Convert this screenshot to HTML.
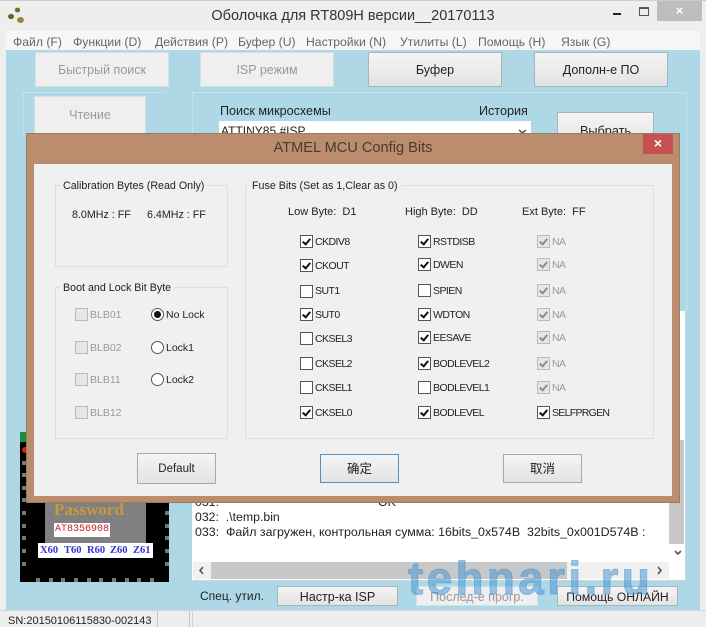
<!DOCTYPE html>
<html><head><meta charset="utf-8"><style>
html,body{margin:0;padding:0;width:706px;height:627px;overflow:hidden;background:#eee}
body{position:relative;font-family:"Liberation Sans","Noto Sans CJK SC",sans-serif;font-size:11px;color:#222}
.a{position:absolute}
.t{position:absolute;white-space:nowrap;line-height:14px}
.m{position:absolute;white-space:nowrap;line-height:14px;top:35px;color:#666;font-size:12.2px}
.b{position:absolute;box-sizing:border-box;border:1px solid #a8b4bc;background:linear-gradient(#f4f4f4,#e3e3e3);text-align:center;color:#222;white-space:nowrap;font-size:12.5px}
.d{background:#efefef;border:1px solid #d4e0e6;color:#999}
.g{position:absolute;box-sizing:border-box;border:1px solid #dfdfdf}
.cb{position:absolute;box-sizing:border-box;width:13px;height:13px;border:1px solid #555;background:#fff}
.cb.k::after,.cb.n::after{content:"";position:absolute;left:3px;top:1px;width:3px;height:6px;border:solid #111;border-width:0 2px 2px 0;transform:rotate(40deg)}
.cb.n,.cb.x{border-color:#bbb;background:#e6e6e6}
.cb.n::after{border-color:#8e8e8e}
.l{position:absolute;white-space:nowrap;line-height:14px;font-size:10.5px;letter-spacing:-.55px;color:#222}
.l.n{color:#999}
.r{position:absolute;box-sizing:border-box;width:13px;height:13px;border:1px solid #555;border-radius:50%;background:#fff}
.pad{position:absolute;width:4px;height:4px;background:#777}
.c{position:absolute;top:543px;line-height:15px;color:#3434cc;font-family:'Liberation Serif',serif;font-size:10.5px;font-weight:bold;white-space:nowrap}
</style></head><body>

<!-- main window -->
<div class="a" style="left:6px;top:50px;width:694px;height:560px;background:#aed8e6"></div>
<div class="a" style="left:700px;top:50px;width:6px;height:577px;background:#eee"></div>
<div class="a" style="left:0;top:0;width:706px;height:1px;background:#ccc"></div>

<!-- app icon -->
<svg class="a" style="left:7px;top:6px" width="18" height="18"><ellipse cx="10.5" cy="4" rx="2.6" ry="2.4" fill="#6f6f2a"/><ellipse cx="4" cy="10.5" rx="3" ry="2.6" fill="#5c6a28"/><ellipse cx="13.5" cy="14" rx="3.4" ry="3" fill="#94883a"/></svg>
<div class="t" style="left:0;width:706px;top:6px;text-align:center;font-size:14.5px;line-height:20px;color:#333">Оболочка для RT809H версии__20170113</div>
<!-- window controls -->
<div class="a" style="left:613px;top:13px;width:8px;height:2px;background:#222"></div>
<div class="a" style="left:639px;top:7px;width:8px;height:6px;border:1px solid #555;border-top-width:2px"></div>
<div class="a" style="left:657px;top:1px;width:45px;height:20px;background:#bdbdbd;color:#fff;text-align:center;font-size:13px;line-height:20px;font-weight:bold">×</div>

<!-- menu -->
<div class="a" style="left:6px;top:31px;width:694px;height:19px;background:#f6f6f6"></div>
<div class="m" style="left:13px">Файл (F)</div>
<div class="m" style="left:73px">Функции (D)</div>
<div class="m" style="left:155px">Действия (P)</div>
<div class="m" style="left:238px">Буфер (U)</div>
<div class="m" style="left:306px">Настройки (N)</div>
<div class="m" style="left:400px">Утилиты (L)</div>
<div class="m" style="left:478px">Помощь (H)</div>
<div class="m" style="left:561px">Язык (G)</div>

<!-- top buttons -->
<div class="b d" style="left:35px;top:52px;width:134px;height:35px;line-height:35px">Быстрый поиск</div>
<div class="b d" style="left:200px;top:52px;width:134px;height:35px;line-height:35px">ISP режим</div>
<div class="b" style="left:368px;top:52px;width:134px;height:35px;line-height:35px">Буфер</div>
<div class="b" style="left:534px;top:52px;width:134px;height:35px;line-height:35px">Дополн-е ПО</div>

<!-- group lines -->
<div class="a" style="left:23px;top:92px;width:142px;height:1px;background:#c4e2ec"></div>
<div class="a" style="left:23px;top:92px;width:1px;height:42px;background:#c4e2ec"></div>
<div class="a" style="left:192px;top:92px;width:494px;height:1px;background:#c4e2ec"></div>
<div class="a" style="left:192px;top:92px;width:1px;height:42px;background:#c4e2ec"></div>
<div class="a" style="left:686px;top:92px;width:1px;height:220px;background:#c4e2ec"></div>

<div class="b d" style="left:34px;top:96px;width:112px;height:40px;line-height:37px">Чтение</div>
<div class="t" style="left:220px;top:104px;font-size:12.6px;color:#222">Поиск микросхемы</div>
<div class="t" style="left:479px;top:104px;font-size:12.6px;color:#222">История</div>
<div class="a" style="left:219px;top:121px;width:312px;height:14px;background:#fff"></div>
<div class="t" style="left:221px;top:124px;font-size:12px">ATTINY85 #ISP</div>
<svg class="a" style="left:518px;top:129px" width="9" height="5"><path d="M1 1 L4.5 4 L8 1" stroke="#444" stroke-width="1.4" fill="none"/></svg>
<div class="b" style="left:557px;top:112px;width:97px;height:36px;line-height:36px;font-size:12.7px">Выбрать</div>

<!-- chip image -->
<div class="a" style="left:20px;top:432px;width:149px;height:150px;background:#000"></div>
<div class="a" style="left:20px;top:432px;width:6px;height:10px;background:#1e8a3c"></div>
<div class="a" style="left:22px;top:447px;width:6px;height:6px;background:#d42020;border-radius:50%"></div>
<div class="a" style="left:45px;top:490px;width:101px;height:53px;background:#808080"></div>
<div class="t" style="left:54px;top:500px;font-family:'Liberation Serif',serif;font-size:17px;font-weight:bold;line-height:20px;color:#c89a3a">Password</div>
<div class="t" style="left:54px;top:523px;width:56px;height:14px;background:#fff;color:#c8202a;font-family:'Liberation Mono',monospace;font-size:10px;text-align:center;line-height:14px">AT8356908</div>
<div class="a" style="left:38px;top:543px;width:115px;height:15px;background:#fff"></div>
<div class="c" style="left:40px">X60</div><div class="c" style="left:64px">T60</div><div class="c" style="left:87px">R60</div><div class="c" style="left:110px">Z60</div><div class="c" style="left:133px">Z61</div>
<div class="pad" style="left:22px;top:461px"></div><div class="pad" style="left:22px;top:473px"></div><div class="pad" style="left:22px;top:486px"></div><div class="pad" style="left:22px;top:498px"></div><div class="pad" style="left:22px;top:511px"></div><div class="pad" style="left:22px;top:524px"></div><div class="pad" style="left:22px;top:536px"></div><div class="pad" style="left:22px;top:549px"></div><div class="pad" style="left:22px;top:562px"></div>
<div class="pad" style="left:165px;top:511px"></div><div class="pad" style="left:165px;top:524px"></div><div class="pad" style="left:165px;top:536px"></div><div class="pad" style="left:165px;top:549px"></div><div class="pad" style="left:165px;top:562px"></div>
<div class="pad" style="left:36px;top:578px"></div><div class="pad" style="left:49px;top:578px"></div><div class="pad" style="left:61px;top:578px"></div><div class="pad" style="left:74px;top:578px"></div><div class="pad" style="left:87px;top:578px"></div><div class="pad" style="left:99px;top:578px"></div><div class="pad" style="left:112px;top:578px"></div><div class="pad" style="left:125px;top:578px"></div><div class="pad" style="left:137px;top:578px"></div><div class="pad" style="left:150px;top:578px"></div>

<!-- log -->
<div class="a" style="left:192px;top:311px;width:494px;height:270px;background:#fff;border-right:1px solid #c4d8e0;border-bottom:1px solid #c4d8e0;box-sizing:border-box"></div>
<div class="a" style="left:669px;top:440px;width:15px;height:104px;background:#c8c8c8"></div>
<svg class="a" style="left:674px;top:550px" width="8" height="6"><path d="M1 1 L4 4 L7 1" stroke="#555" stroke-width="1.6" fill="none"/></svg>
<div class="a" style="left:193px;top:562px;width:476px;height:17px;background:#f0f0f0"></div>
<div class="a" style="left:211px;top:562px;width:356px;height:17px;background:#c8c8c8"></div>
<svg class="a" style="left:198px;top:566px" width="7" height="9"><path d="M5 1 L2 4.5 L5 8" stroke="#555" stroke-width="1.6" fill="none"/></svg>
<svg class="a" style="left:656px;top:566px" width="7" height="9"><path d="M2 1 L5 4.5 L2 8" stroke="#555" stroke-width="1.6" fill="none"/></svg>
<div class="t" style="left:195px;top:495px;font-size:12.3px">031:</div>
<div class="t" style="left:378px;top:495px;font-size:12.3px">OK</div>
<div class="t" style="left:195px;top:510px;font-size:12.3px;color:#222">032:&nbsp; .\temp.bin</div>
<div class="t" style="left:195px;top:525px;font-size:12.4px;color:#222">033:&nbsp; Файл загружен, контрольная сумма: 16bits_0x574B&nbsp; 32bits_0x001D574B :</div>

<!-- bottom row -->
<div class="t" style="left:200px;top:589px;font-size:12px">Спец. утил.</div>
<div class="b" style="left:277px;top:586px;width:121px;height:20px;line-height:20px">Настр-ка ISP</div>
<div class="b d" style="left:416px;top:586px;width:122px;height:20px;line-height:20px">Послед-е прогр.</div>
<div class="b" style="left:557px;top:586px;width:121px;height:20px;line-height:20px;font-size:12.2px">Помощь ОНЛАЙН</div>

<!-- status -->
<div class="a" style="left:0;top:610px;width:706px;height:17px;background:#eee;border-top:1px solid #d0d8dc;box-sizing:border-box"></div>
<div class="t" style="left:8px;top:614px;font-size:11px;color:#222">SN:20150106115830-002143</div>
<div class="a" style="left:157px;top:611px;width:1px;height:16px;background:#c8c8c8"></div>
<div class="a" style="left:189px;top:611px;width:1px;height:16px;background:#c8c8c8"></div>
<div class="a" style="left:192px;top:611px;width:1px;height:16px;background:#d4d4d4"></div>

<!-- watermark -->
<div class="t" style="left:408px;top:551px;font-size:46px;line-height:54px;font-weight:bold;letter-spacing:3.3px;color:rgba(70,150,210,.52);-webkit-text-stroke:1px rgba(70,150,210,.52)">tehnari.ru</div>

<!-- dialog -->
<div class="a" style="left:26px;top:133px;width:654px;height:370px;background:#bb8d6e;border:1px solid #9a7a62;box-sizing:border-box"></div>
<div class="a" style="left:34px;top:164px;width:638px;height:332px;background:#f0f0f0"></div>
<div class="t" style="left:26px;width:654px;top:138px;text-align:center;font-size:14.6px;line-height:20px;color:#4a3a30">ATMEL MCU Config Bits</div>
<div class="a" style="left:643px;top:134px;width:30px;height:20px;background:#c75050;color:#fff;text-align:center;font-size:14px;line-height:19px;font-weight:bold">×</div>

<div class="g" style="left:55px;top:185px;width:173px;height:82px"></div>
<div class="t" style="left:60px;top:179px;padding:0 3px;background:#f0f0f0;font-size:10.7px">Calibration Bytes (Read Only)</div>
<div class="t" style="left:72px;top:208px;font-size:10.7px">8.0MHz : FF</div>
<div class="t" style="left:147px;top:208px;font-size:10.7px">6.4MHz : FF</div>

<div class="g" style="left:55px;top:287px;width:173px;height:152px"></div>
<div class="t" style="left:60px;top:281px;padding:0 3px;background:#f0f0f0;font-size:10.7px">Boot and Lock Bit Byte</div>

<div class="cb x" style="left:75px;top:308px"></div><div class="l n" style="left:90px;top:308px;letter-spacing:0">BLB01</div>
<div class="cb x" style="left:75px;top:341px"></div><div class="l n" style="left:90px;top:341px;letter-spacing:0">BLB02</div>
<div class="cb x" style="left:75px;top:373px"></div><div class="l n" style="left:90px;top:373px;letter-spacing:0">BLB11</div>
<div class="cb x" style="left:75px;top:406px"></div><div class="l n" style="left:90px;top:406px;letter-spacing:0">BLB12</div>
<div class="r" style="left:151px;top:308px"></div><div class="a" style="left:154px;top:311px;width:7px;height:7px;background:#111;border-radius:50%"></div><div class="l" style="left:166px;top:308px;letter-spacing:0">No Lock</div>
<div class="r" style="left:151px;top:341px"></div><div class="l" style="left:166px;top:341px;letter-spacing:0">Lock1</div>
<div class="r" style="left:151px;top:373px"></div><div class="l" style="left:166px;top:373px;letter-spacing:0">Lock2</div>

<div class="g" style="left:245px;top:185px;width:409px;height:254px"></div>
<div class="t" style="left:249px;top:179px;padding:0 3px;background:#f0f0f0;font-size:10.7px">Fuse Bits (Set as 1,Clear as 0)</div>
<div class="t" style="left:288px;top:205px;font-size:11px">Low Byte:&nbsp; D1</div>
<div class="t" style="left:405px;top:205px;font-size:11px">High Byte:&nbsp; DD</div>
<div class="t" style="left:522px;top:205px;font-size:11px">Ext Byte:&nbsp; FF</div>

<!-- col1 -->
<div class="cb k" style="left:300px;top:235px"></div><div class="l" style="left:315px;top:235px">CKDIV8</div>
<div class="cb k" style="left:300px;top:259px"></div><div class="l" style="left:315px;top:259px">CKOUT</div>
<div class="cb" style="left:300px;top:285px"></div><div class="l" style="left:315px;top:284px">SUT1</div>
<div class="cb k" style="left:300px;top:308px"></div><div class="l" style="left:315px;top:308px">SUT0</div>
<div class="cb" style="left:300px;top:332px"></div><div class="l" style="left:315px;top:332px">CKSEL3</div>
<div class="cb" style="left:300px;top:357px"></div><div class="l" style="left:315px;top:357px">CKSEL2</div>
<div class="cb" style="left:300px;top:381px"></div><div class="l" style="left:315px;top:381px">CKSEL1</div>
<div class="cb k" style="left:300px;top:406px"></div><div class="l" style="left:315px;top:406px">CKSEL0</div>
<!-- col2 -->
<div class="cb k" style="left:418px;top:235px"></div><div class="l" style="left:433px;top:235px">RSTDISB</div>
<div class="cb k" style="left:418px;top:258px"></div><div class="l" style="left:433px;top:258px">DWEN</div>
<div class="cb" style="left:418px;top:284px"></div><div class="l" style="left:433px;top:284px">SPIEN</div>
<div class="cb k" style="left:418px;top:308px"></div><div class="l" style="left:433px;top:308px">WDTON</div>
<div class="cb k" style="left:418px;top:331px"></div><div class="l" style="left:433px;top:331px">EESAVE</div>
<div class="cb k" style="left:418px;top:357px"></div><div class="l" style="left:433px;top:357px">BODLEVEL2</div>
<div class="cb" style="left:418px;top:381px"></div><div class="l" style="left:433px;top:381px">BODLEVEL1</div>
<div class="cb k" style="left:418px;top:406px"></div><div class="l" style="left:433px;top:406px">BODLEVEL</div>
<!-- col3 -->
<div class="cb n" style="left:537px;top:235px"></div><div class="l n" style="left:552px;top:235px">NA</div>
<div class="cb n" style="left:537px;top:258px"></div><div class="l n" style="left:552px;top:258px">NA</div>
<div class="cb n" style="left:537px;top:284px"></div><div class="l n" style="left:552px;top:284px">NA</div>
<div class="cb n" style="left:537px;top:308px"></div><div class="l n" style="left:552px;top:308px">NA</div>
<div class="cb n" style="left:537px;top:331px"></div><div class="l n" style="left:552px;top:331px">NA</div>
<div class="cb n" style="left:537px;top:357px"></div><div class="l n" style="left:552px;top:357px">NA</div>
<div class="cb n" style="left:537px;top:381px"></div><div class="l n" style="left:552px;top:381px">NA</div>
<div class="cb k" style="left:537px;top:406px"></div><div class="l" style="left:552px;top:406px;letter-spacing:-.7px">SELFPRGEN</div>

<div class="b" style="left:137px;top:453px;width:79px;height:31px;line-height:30px;border-color:#a8a8a8;font-size:11.5px">Default</div>
<div class="b" style="left:320px;top:454px;width:79px;height:29px;line-height:28px;border-color:#4f92c4;font-size:12.5px">确定</div>
<div class="b" style="left:503px;top:454px;width:79px;height:29px;line-height:28px;border-color:#a8a8a8;font-size:12.5px">取消</div>
</body></html>
